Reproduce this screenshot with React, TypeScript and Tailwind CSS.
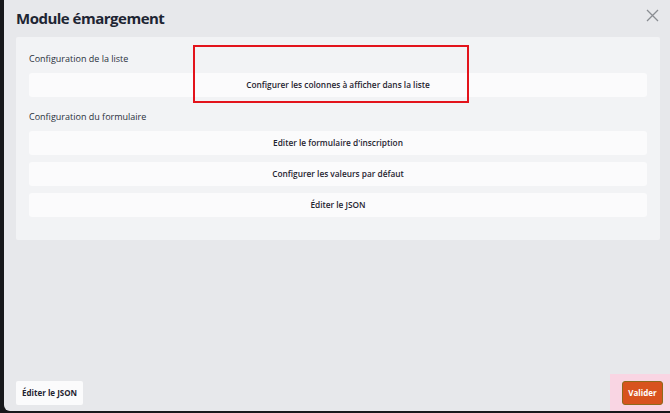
import React from "react";

const font = { fontFamily: '"Open Sans", "Noto Sans", sans-serif' };

function Row({ label }: { label: string }) {
  return (
    <div className="h-[24px] flex items-center justify-center bg-[#fbfbfc] rounded-[3px] text-[8.3px] font-semibold text-[#1f2430]">
      {label}
    </div>
  );
}

export default function App() {
  return (
    <div className="w-[670px] h-[413px] bg-[#17181b] flex overflow-hidden" style={font}>
      <div className="ml-[4px] flex-1 h-[411px] bg-[#e7e8eb] rounded-bl-[6px] flex flex-col relative">
        <div className="h-[37px] flex items-center justify-between pl-[12px] pr-[13px]">
          <div className="text-[15px] font-bold text-[#1e2533] tracking-[-0.5px]">Module émargement</div>
          <svg width="13" height="13" viewBox="0 0 13 13" className="mt-[-6px]">
            <path d="M1 1 L12 12 M12 1 L1 12" stroke="#8a8d92" strokeWidth="1.3" />
          </svg>
        </div>
        <div className="mx-[12px] w-[644px] h-[203px] bg-[#f2f3f5] rounded-[2px] px-[13px] pt-[15px] flex flex-col relative">
          <div className="text-[9px] text-[#2a303c] h-[14px] leading-[14px]">Configuration de la liste</div>
          <div className="mt-[7px]">
            <Row label="Configurer les colonnes à afficher dans la liste" />
          </div>
          <div className="mt-[13px] text-[9px] text-[#2a303c] h-[14px] leading-[14px]">Configuration du formulaire</div>
          <div className="mt-[7px] flex flex-col gap-[7px]">
            <Row label="Editer le formulaire d'inscription" />
            <Row label="Configurer les valeurs par défaut" />
            <Row label="Éditer le JSON" />
          </div>
          <div className="absolute left-[177px] top-[8px] w-[276px] h-[58px] border-2 border-[#e3131b]" />
        </div>
        <div className="mt-auto mb-[6px] flex items-end justify-between pl-[12px]">
          <div className="h-[24px] px-[6px] flex items-center bg-[#fbfbfc] rounded-[2px] text-[8px] font-bold text-[#1f2430]">
            Éditer le JSON
          </div>
          <div className="w-[62px] h-[37px] bg-[#f9d5e3] flex items-end pl-[12px] pb-[1px] -mb-[6px]">
            <div className="w-[41px] h-[24px] rounded-[3px] bg-[#d8531e] border-[1.5px] border-[#8d6a1c] flex items-center justify-center text-[8px] font-bold text-white mb-[5px]">
              Valider
            </div>
          </div>
        </div>
      </div>
    </div>
  );
}
